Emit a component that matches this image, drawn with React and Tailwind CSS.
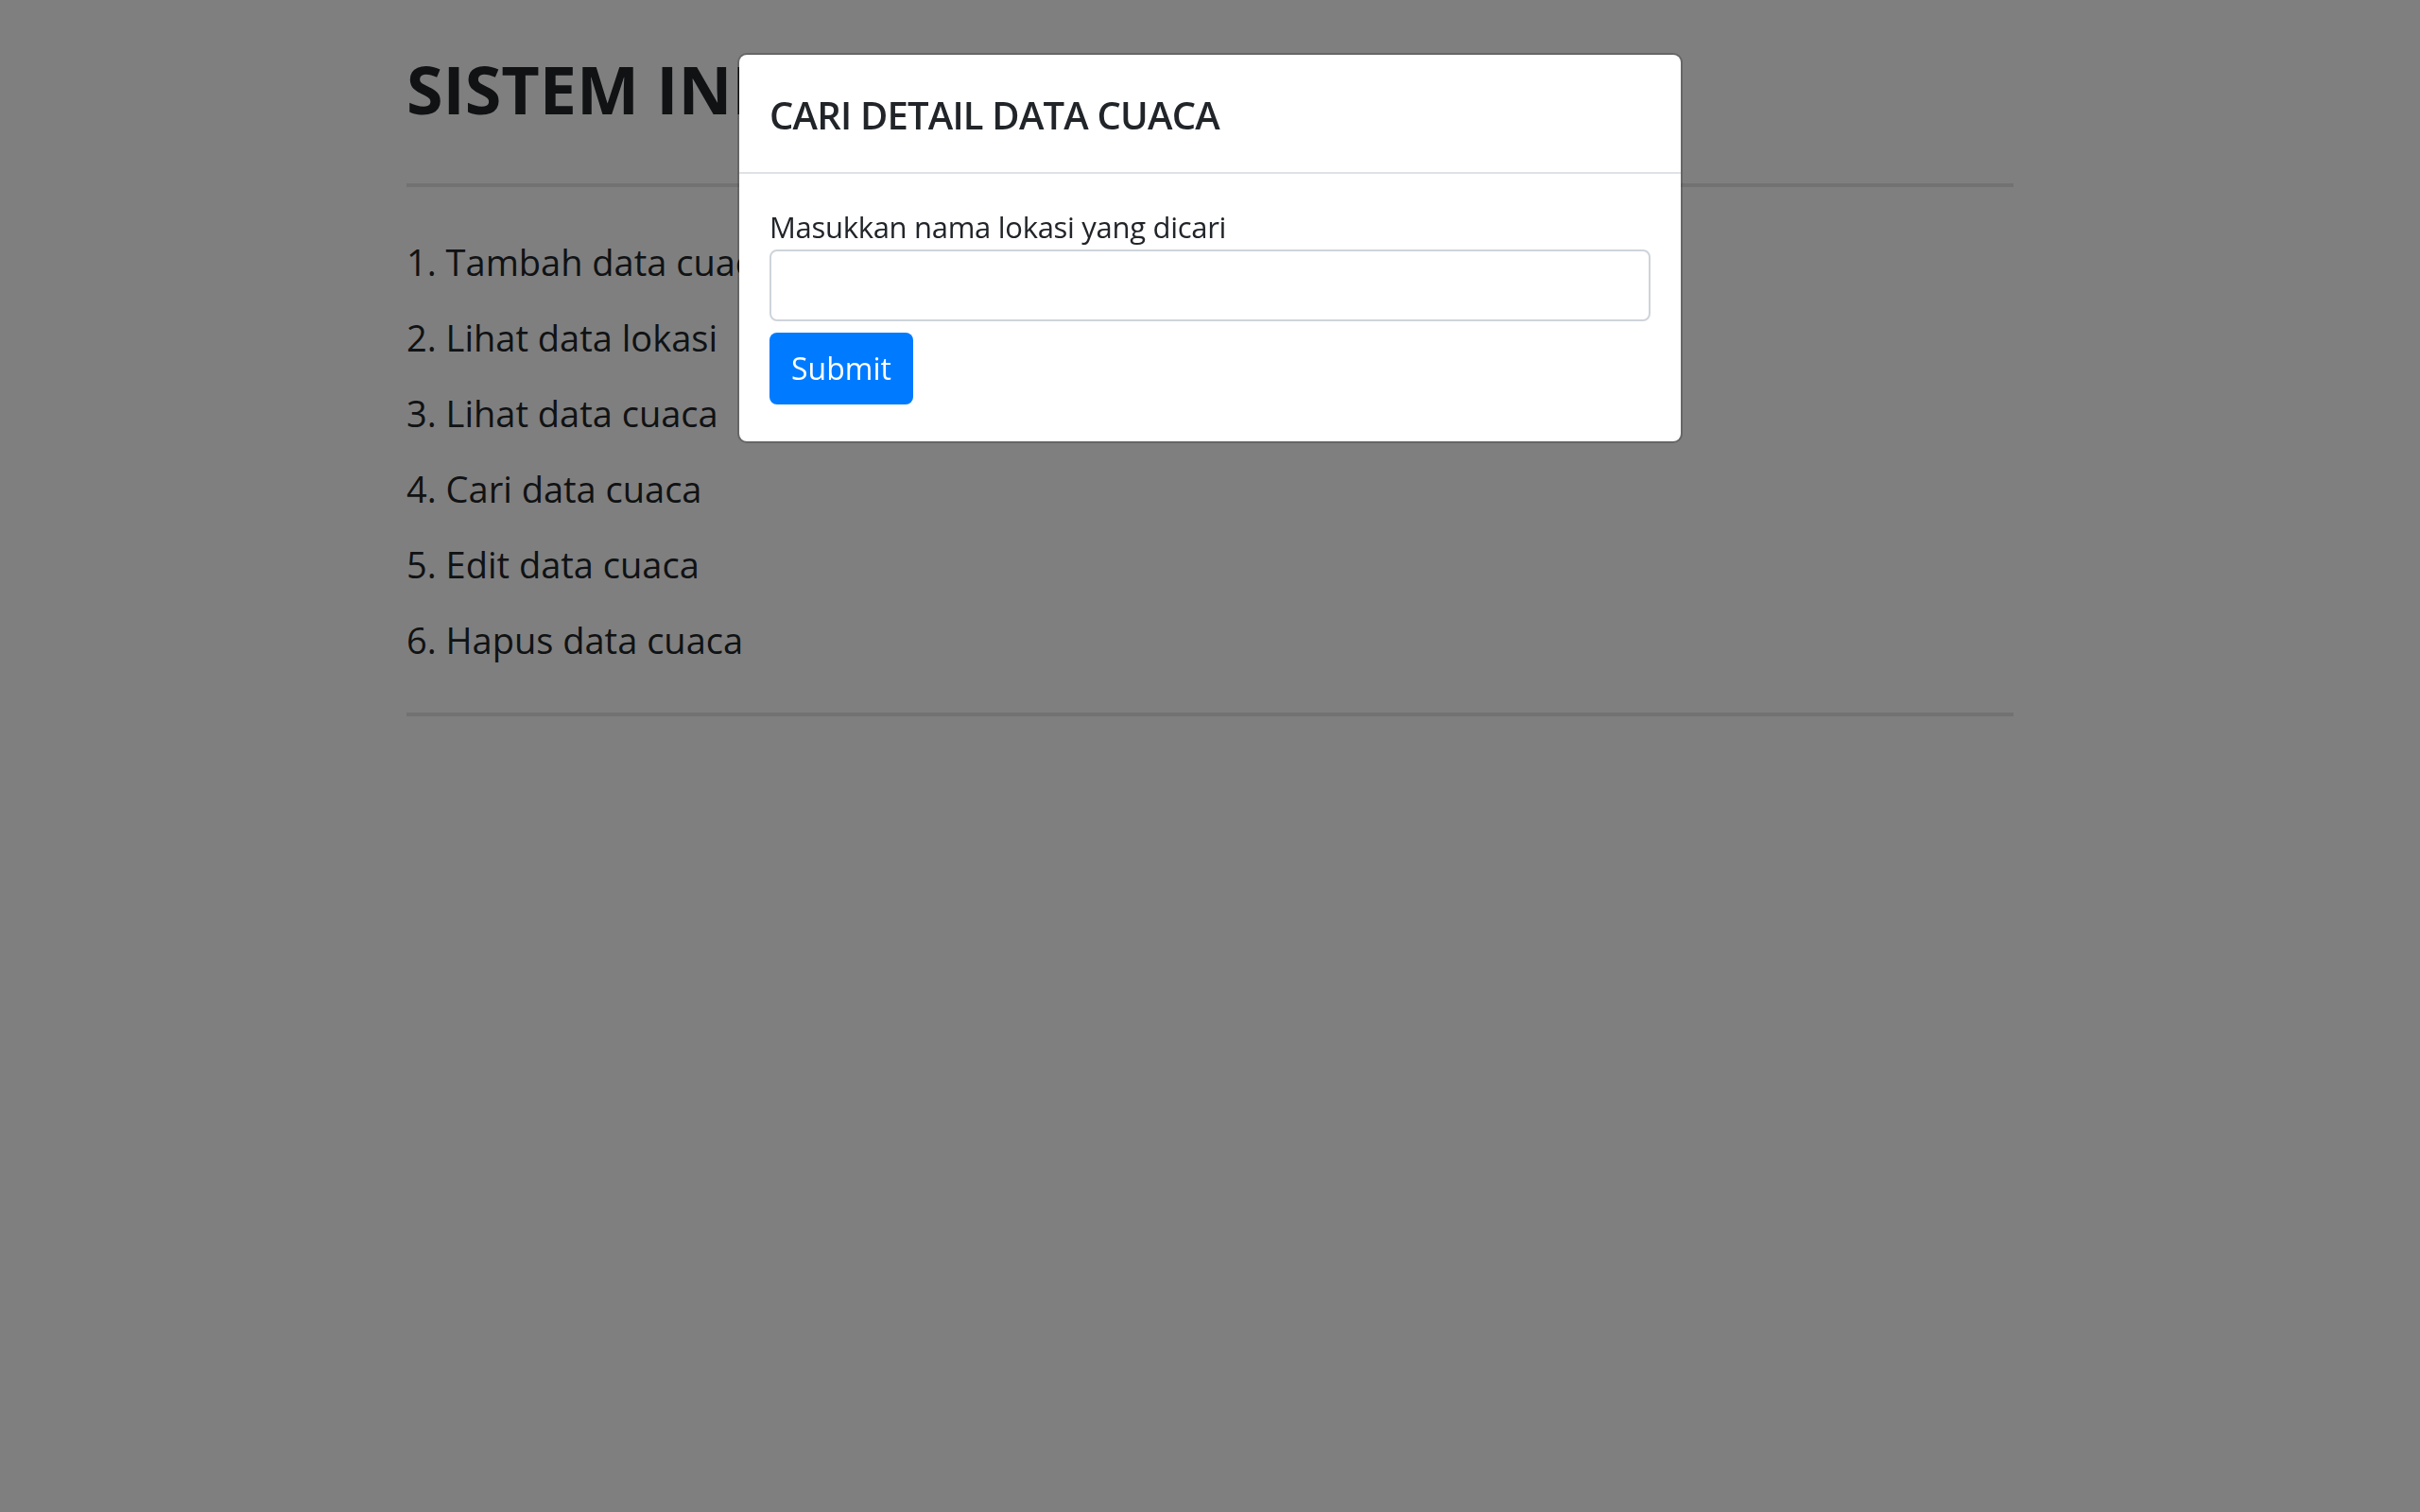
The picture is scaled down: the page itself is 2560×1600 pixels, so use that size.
export default function App() {
  const menu = [
    '1. Tambah data cuaca',
    '2. Lihat data lokasi',
    '3. Lihat data cuaca',
    '4. Cari data cuaca',
    '5. Edit data cuaca',
    '6. Hapus data cuaca',
  ]

  return (
    <div className="relative min-h-screen bg-white text-[#212529] font-['Open_Sans',sans-serif]">

      {/* Halaman utama */}
      <div className="w-[1700px] ml-[430px] pt-[52px]">
        <h1 className="text-[70px] leading-[84px] font-bold">SISTEM INFORMASI CUACA</h1>
        <div className="h-[4px] bg-black/10 mt-[58px]" />
        <div className="pt-[39px] pb-[37px]">
          {menu.map((item) => (
            <p key={item} className="text-[38px] leading-[80px]">{item}</p>
          ))}
        </div>
        <div className="h-[4px] bg-black/10" />
      </div>

      {/* Backdrop */}
      <div className="fixed inset-0 bg-black/50" />

      {/* Modal */}
      <div className="fixed inset-0 flex justify-center items-start pt-[56px]">
        <div className="w-[1000px] bg-white border-2 border-black/20 rounded-[10px] bg-clip-padding">
          <div className="px-[32px] pt-[34px] pb-[30px] border-b-2 border-[#dee2e6]">
            <h5 className="text-[40px] leading-[60px] font-semibold tracking-[-0.8px]">CARI DETAIL DATA CUACA</h5>
          </div>
          <div className="px-[32px] pt-[32px] pb-[39px]">
            <label className="block text-[31px] leading-[48px] tracking-[-0.3px]">Masukkan nama lokasi yang dicari</label>
            <input
              type="text"
              className="block w-full h-[76px] px-[24px] text-[32px] border-2 border-[#ced4da] rounded-[8px] outline-none"
            />
            <button className="mt-[12px] w-[152px] h-[76px] bg-[#007bff] text-white text-[32px] leading-[48px] rounded-[8px]">
              Submit
            </button>
          </div>
        </div>
      </div>
    </div>
  )
}
